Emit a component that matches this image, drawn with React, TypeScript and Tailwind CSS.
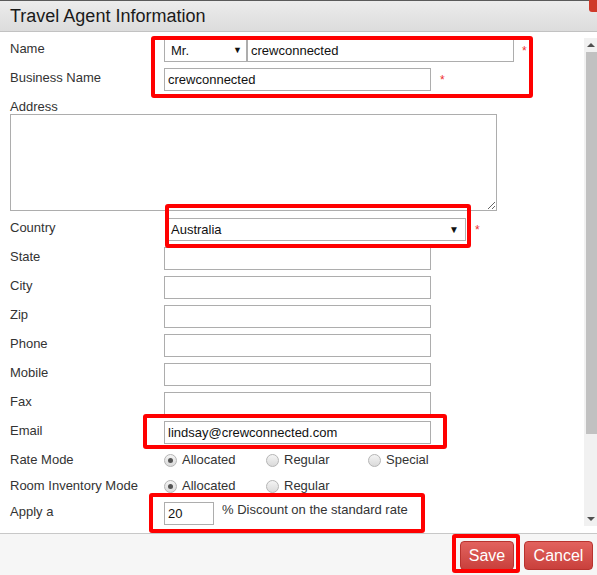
import React from "react";

const inputCls = "h-[23px] border border-[#adadad] bg-white px-[3px] text-[13px] text-[#111] outline-none";

function Row({ label, children, className = "" }: { label: string; children?: React.ReactNode; className?: string }) {
  return (
    <div className={"flex items-start h-[23px] mb-[6px] " + className}>
      <div className="w-[164px] shrink-0 pl-[10px] mt-[2px] leading-[16px]">{label}</div>
      {children}
    </div>
  );
}

function Star() {
  return <span className="text-[#ef2d2d] text-[12px] leading-none mt-[6px]">*</span>;
}

function Radio({ checked, label }: { checked?: boolean; label: string }) {
  return (
    <div className="w-[102px] flex items-center gap-[5px]">
      <span className="w-[13px] h-[13px] rounded-full border border-[#b5b5b5] bg-gradient-to-b from-[#f4f4f4] to-[#dadada] flex items-center justify-center">
        {checked && <span className="w-[5px] h-[5px] rounded-full bg-[#555]" />}
      </span>
      <span>{label}</span>
    </div>
  );
}

export default function App() {
  return (
    <div className="relative w-[597px] h-[575px] overflow-hidden bg-white text-[13px] text-[#333] font-['Liberation_Sans',Arial,sans-serif]">
      {/* header */}
      <div className="h-[32px] border-t border-[#5a5a5a] border-b border-b-[#c2c2c2] bg-gradient-to-b from-[#ececec] to-[#dcdcdc] flex items-center pl-[10px] text-[18px] text-[#1a1a1a]">
        Travel Agent Information
      </div>
      <div className="absolute right-0 top-0 w-[8px] h-[12px] bg-[#cf3a2a] rounded-bl-[3px]" />

      {/* body */}
      <div className="flex h-[501px]">
        <div className="flex-1 pt-[7px]">
          <Row label="Name">
            <div className={inputCls + " w-[83px] flex items-center justify-between pl-[6px] pr-[4px]"}>
              <span>Mr.</span>
              <span className="text-[9px]">▼</span>
            </div>
            <input className={inputCls + " w-[267px]"} defaultValue="crewconnected" />
            <span className="ml-[8px] flex"><Star /></span>
          </Row>
          <Row label="Business Name">
            <input className={inputCls + " w-[267px]"} defaultValue="crewconnected" />
            <span className="ml-[9px] flex"><Star /></span>
          </Row>
          <div className="h-[17px] pl-[10px] pt-[2px] leading-[16px]">Address</div>
          <textarea className="block ml-[10px] w-[487px] h-[97px] border border-[#adadad] mb-[7px] outline-none resize" />
          <Row label="Country">
            <div className="ml-[1px] w-[301px] h-[23px] border border-[#b0b0b0] flex items-center justify-between pl-[5px] pr-[6px] text-[#111]">
              <span>Australia</span>
              <span className="text-[10px]">▼</span>
            </div>
            <span className="ml-[9px] flex"><Star /></span>
          </Row>
          <Row label="State"><input className={inputCls + " w-[267px]"} /></Row>
          <Row label="City"><input className={inputCls + " w-[267px]"} /></Row>
          <Row label="Zip"><input className={inputCls + " w-[267px]"} /></Row>
          <Row label="Phone"><input className={inputCls + " w-[267px]"} /></Row>
          <Row label="Mobile"><input className={inputCls + " w-[267px]"} /></Row>
          <Row label="Fax"><input className={inputCls + " w-[267px]"} /></Row>
          <Row label="Email">
            <input className={inputCls + " w-[267px]"} defaultValue="lindsay@crewconnected.com" />
          </Row>
          <div className="flex items-center h-[20px] mb-[6px]">
            <div className="w-[164px] shrink-0 pl-[10px]">Rate Mode</div>
            <Radio checked label="Allocated" />
            <Radio label="Regular" />
            <Radio label="Special" />
          </div>
          <div className="flex items-center h-[20px] mb-[6px]">
            <div className="w-[164px] shrink-0 pl-[10px]">Room Inventory Mode</div>
            <Radio checked label="Allocated" />
            <Radio label="Regular" />
          </div>
          <div className="flex items-start h-[23px]">
            <div className="w-[164px] shrink-0 pl-[10px] mt-[2px] leading-[16px]">Apply a</div>
            <input className={inputCls + " w-[50px]"} defaultValue="20" />
            <span className="ml-[8px] leading-[15px]">% Discount on the standard rate</span>
          </div>
        </div>

        {/* scrollbar */}
        <div className="w-[13px] mt-[6px] mb-[7px] bg-[#f1f1f1] flex flex-col items-center">
          <div className="h-[14px] flex items-center justify-center">
            <span className="w-0 h-0 border-l-[4px] border-r-[4px] border-b-[4px] border-l-transparent border-r-transparent border-b-[#505050]" />
          </div>
          <div className="w-[11px] h-[382px] bg-[#c1c1c1] ml-[2px]" />
          <div className="flex-1" />
          <div className="h-[14px] flex items-center justify-center">
            <span className="w-0 h-0 border-l-[4px] border-r-[4px] border-t-[4px] border-l-transparent border-r-transparent border-t-[#505050]" />
          </div>
        </div>
      </div>

      {/* footer */}
      <div className="h-[42px] border-t border-[#c8c8c8] bg-[#f6f6f6] flex justify-end items-start gap-[10px] pt-[7px] pr-[4px]">
        <button className="w-[54px] h-[29px] rounded-[4px] border border-[#b8332f] bg-gradient-to-b from-[#e2625e] to-[#c9403c] text-white text-[16px]">
          Save
        </button>
        <button className="w-[69px] h-[29px] rounded-[4px] border border-[#b8332f] bg-gradient-to-b from-[#e2625e] to-[#c9403c] text-white text-[16px]">
          Cancel
        </button>
      </div>

      {/* annotation boxes */}
      <div className="absolute left-[151px] top-[36px] w-[382px] h-[62px] border-4 border-[#ff0000] rounded-[3px] pointer-events-none" />
      <div className="absolute left-[165px] top-[204px] w-[306px] h-[44px] border-4 border-[#ff0000] rounded-[3px] pointer-events-none" />
      <div className="absolute left-[143px] top-[414px] w-[304px] h-[35px] border-4 border-[#ff0000] rounded-[3px] pointer-events-none" />
      <div className="absolute left-[149px] top-[493px] w-[276px] h-[40px] border-4 border-[#ff0000] rounded-[3px] pointer-events-none" />
      <div className="absolute left-[452px] top-[534px] w-[68px] h-[39px] border-4 border-[#ff0000] rounded-[3px] pointer-events-none" />
    </div>
  );
}
